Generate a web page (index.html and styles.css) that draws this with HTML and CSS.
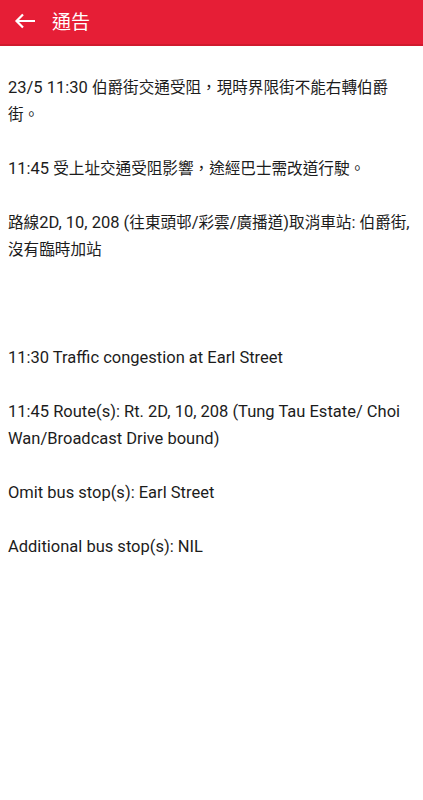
FILE: index.html
```html
<!DOCTYPE html>
<html lang="zh-Hant">
<head>
<meta charset="utf-8">
<link rel="stylesheet" href="styles.css">
</head>
<body>
<header class="bar">
  <svg class="back" width="22" height="16" viewBox="0 0 22 16"><path d="M21 8H2.5M9 1.5L2.5 8L9 14.5" fill="none" stroke="#fff" stroke-width="2.2"/></svg>
  <span class="title">通告</span>
</header>
<main class="notice">
<p>23/5 11:30 <span class="zh">伯爵街交通受阻，現時界限街不能右轉伯爵街。</span></p>
<p class="gap1">11:45 <span class="zh">受上址交通受阻影響，途經巴士需改道行駛。</span></p>
<p class="gap1"><span class="zh">路線</span>2D, 10, 208 (<span class="zh">往東頭邨</span>/<span class="zh">彩雲</span>/<span class="zh">廣播道</span>)<span class="zh">取消車站</span>: <span class="zh">伯爵街</span>, <span class="zh">沒有臨時加站</span></p>
<p class="gap3">11:30 Traffic congestion at Earl Street</p>
<p class="gap1">11:45 Route(s): Rt. 2D, 10, 208 (Tung Tau Estate/ Choi Wan/Broadcast Drive bound)</p>
<p class="gap1">Omit bus stop(s): Earl Street</p>
<p class="gap1">Additional bus stop(s): NIL</p>
</main>
</body>
</html>
```
FILE: styles.css
```css
html, body { margin: 0; padding: 0; background: #fff; }
body { font-family: Roboto, "Noto Sans CJK TC", sans-serif; color: #1c1c1c; }
.bar {
  height: 44px;
  background: #e61e36;
  border-bottom: 2px solid #d01a2e;
  display: flex;
  align-items: center;
  padding-left: 14px;
  gap: 16px;
}
.back { display: block; margin-top: -2px; }
.title { color: #fff; font-size: 19px; line-height: 1; }
.notice {
  padding: 28px 8px 0 8px;
  font-size: 16.5px;
  line-height: 27px;
}
.notice p { margin: 0; }
.zh { font-size: 15.6px; line-height: 16px; }
.gap1 { margin-top: 27px !important; }
.gap3 { margin-top: 81px !important; }
```
